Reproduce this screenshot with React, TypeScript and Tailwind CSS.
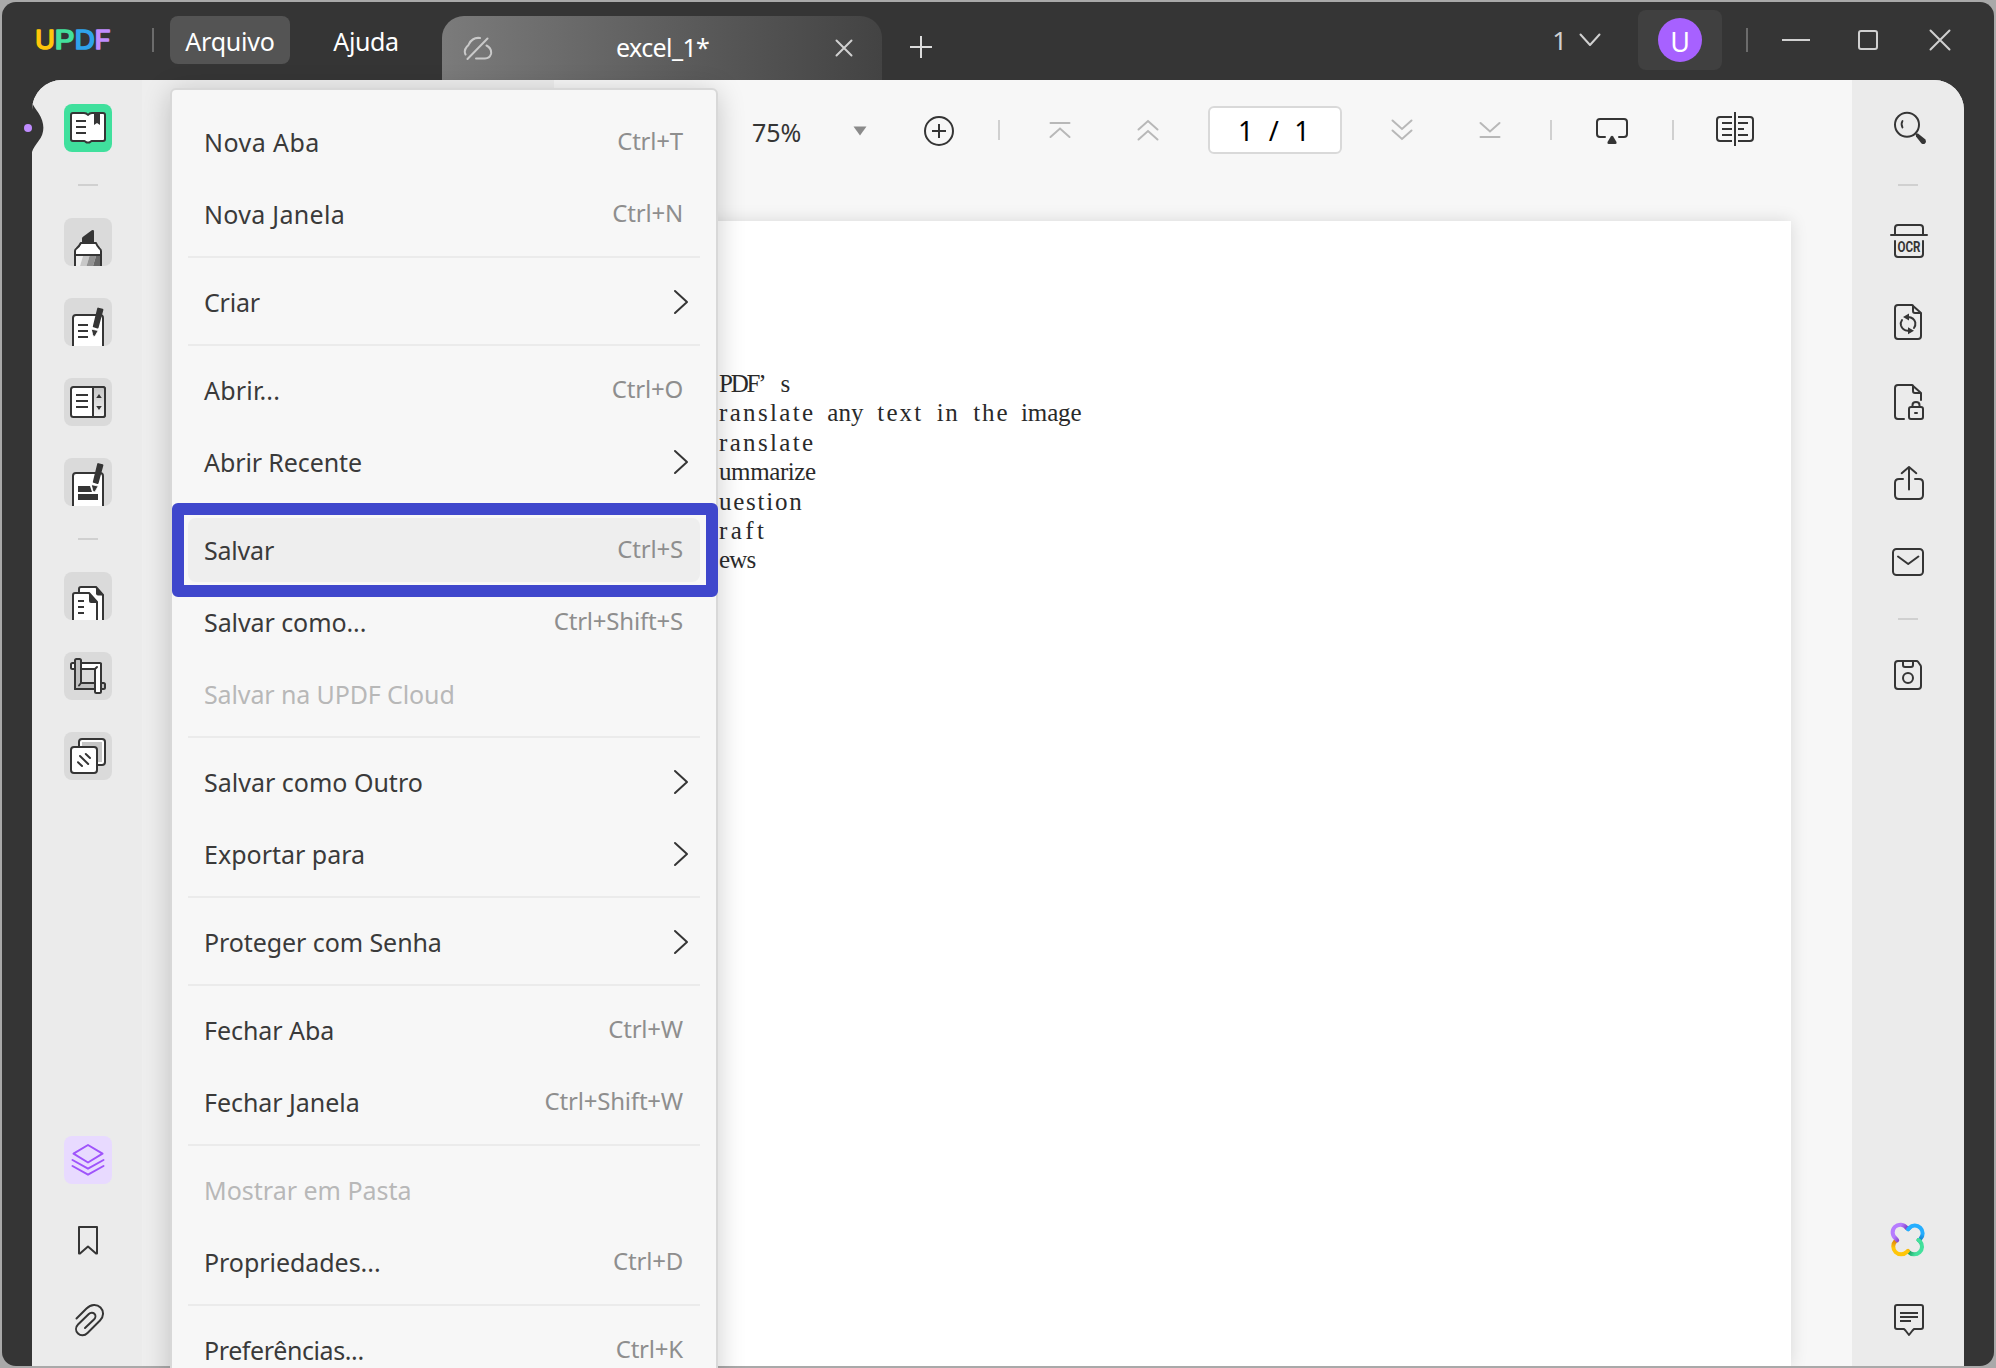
import React, { type ReactNode } from "react";

const INK = "#353535";

function Glyph({ children, stroke = INK }: { children: ReactNode; stroke?: string }) {
  return (
    <svg
      viewBox="0 0 48 48"
      className="block h-12 w-12 shrink-0"
      fill="none"
      stroke={stroke}
      strokeWidth={2}
      strokeLinecap="round"
      strokeLinejoin="round"
    >
      {children}
    </svg>
  );
}

function Tile({ children, tone = "bg-[#dadada]" }: { children: ReactNode; tone?: string }) {
  return <button className={`block h-12 w-12 overflow-hidden rounded-lg ${tone}`}>{children}</button>;
}

function Dash() {
  return <div className="h-0.5 w-5 shrink-0 bg-[#d0d0d0]" />;
}

function Pen({ dy = 0 }: { dy?: number }) {
  return (
    <g transform={`translate(0 ${dy})`}>
      <path d="M34.2 10.6 L38.4 11.8 L33.6 29.6 L29.8 28.4 Z" fill={INK} strokeWidth={2} />
      <path d="M27.6 31.2 L34.2 32.6 L31 38.2 L29.8 38.6 L28.8 37 Z" fill={INK} stroke="#fff" strokeWidth={0.8} />
    </g>
  );
}

/* ---------- left rail ---------- */

function ReaderIcon() {
  return (
    <Glyph>
      <path
        d="M9 9 H20 Q22.5 9 24 11 Q25.5 9 28 9 H39 Q41 9 41 11 V35 Q41 37 39 37 H27.5 L25.5 38.4 H22.5 L20.500 37 H9 Q7 37 7 35 V11 Q7 9 9 9 Z"
        fill="#fff"
      />
      <path d="M30 8 H36 V21 L33 19 L30 21 Z" fill={INK} stroke="none" />
      <path d="M12 17 H22 M12 23 H22 M12 29 H22" strokeLinecap="butt" />
    </Glyph>
  );
}

function HighlighterIcon() {
  return (
    <Glyph>
      <path d="M11 50 V33 Q11 31.500 12.500 30.500 Q15.500 28 16.800 25 H32 Q33 28 35.500 30.500 Q37 31.500 37 33 V50 Z" fill="#fff" />
      <path d="M12 38 H19 L16 48 H12 Z" fill="#f0f0f0" stroke="none" />
      <path d="M19 38 H25.500 L22.500 48 H16 Z" fill="#c8c8c8" stroke="none" />
      <path d="M25.500 38 H32 L29 48 H22.500 Z" fill="#929292" stroke="none" />
      <path d="M32 38 H36 V48 H29 Z" fill="#686868" stroke="none" />
      <path d="M11 37 H37" />
      <path d="M18 25 V20.500 Q18 19.500 19 18.700 L27.800 12.300 Q30 11.500 30 13.500 V25 Z" fill={INK} stroke="none" />
    </Glyph>
  );
}

function EditIcon() {
  return (
    <Glyph>
      <path d="M9 50 V20 Q9 17 12 17 H36 Q39 17 39 20 V50" fill="#fff" />
      <path d="M14 27 H24 M14 33 H24 M14 39 H24" strokeLinecap="butt" />
      <Pen />
    </Glyph>
  );
}

function FormIcon() {
  return (
    <Glyph>
      <defs>
        <linearGradient id="form-side" x1="0" y1="0" x2="0" y2="1">
          <stop offset="0" stopColor="#c4c4c4" />
          <stop offset="1" stopColor="#f5f5f5" />
        </linearGradient>
      </defs>
      <rect x="7" y="9" width="34" height="30" rx="2.500" fill="#fff" />
      <path d="M29 9 H39 Q41 9 41 11 V37 Q41 39 39 39 H29 Z" fill="url(#form-side)" />
      <path d="M12 17 H24 M12 23 H24 M12 29 H24" strokeLinecap="butt" />
      <path d="M32.200 20 L35 16 L37.800 20 Z M32.200 28 L35 32 L37.800 28 Z" fill={INK} stroke="none" />
    </Glyph>
  );
}

function RedactIcon() {
  return (
    <Glyph>
      <path d="M9 50 V18 Q9 15 12 15 H36 Q39 15 39 18 V50" fill="#fff" />
      <path d="M14 28 H26 L28 34 H14 Z M14 36 H34 V42 H14 Z" fill={INK} stroke="none" />
      <Pen dy={-4.5} />
    </Glyph>
  );
}

function PagesIcon() {
  return (
    <Glyph>
      <path d="M15 24 V17 Q15 15 17 15 H32 L39 23 V50 H24 Z" fill="#fff" />
      <path d="M32 14.500 L40 23.500 H34 Q32 23.500 32 21.500 Z" fill={INK} stroke="none" />
      <path d="M9 50 V23 Q9 21 11 21 H25 L33 30 V50" fill="#fff" />
      <path d="M25 20.500 L34 31 H27 Q25 31 25 29 Z" fill={INK} stroke="none" />
      <path d="M14 29 H20 M14 35 H20 M14 41 H20" strokeLinecap="butt" />
    </Glyph>
  );
}

function CropIcon() {
  return (
    <Glyph>
      <rect x="7" y="11" width="8" height="6" rx="1.500" fill="#f2f2f2" />
      <rect x="34" y="31" width="7" height="6" rx="1.500" fill="#c0c0c0" />
      <path d="M13 31 H33 V37 H11 V20 Z" fill="#c0c0c0" />
      <path d="M17 11 H36 Q37 11 37 12 V18 L31 17 H17 Z" fill="#fff" />
      <rect x="31" y="14" width="6" height="27" rx="1.500" fill="#fff" stroke="none" />
      <path d="M37 12 V39.500 Q37 41 35.500 41 H32.500 Q31 41 31 39.500 V17 L33 15" fill="none" />
      <path d="M11 37 V8.500 Q11 7 12.500 7 H15.500 Q17 7 17 8.500 V31 L15 33.500" fill="#c0c0c0" />
      <path d="M17 17 H31 M17 31 H31" />
    </Glyph>
  );
}

function WatermarkIcon() {
  return (
    <Glyph>
      <rect x="15" y="7" width="26" height="26" rx="3" fill="#fff" />
      <rect x="18" y="10" width="20" height="20" fill="#c6c6c6" stroke="none" />
      <rect x="7" y="15" width="26" height="26" rx="3" fill="#fff" />
      <path d="M21.800 22 L26 26 M16 24 L24.200 32 M14 30.300 L18 34" />
    </Glyph>
  );
}

/* ---------- right rail ---------- */

function SearchIcon() {
  return (
    <Glyph>
      <circle cx="23" cy="20.800" r="12" />
      <path d="M18.500 17 Q16.600 20 18.500 23.500" strokeWidth={1.800} />
      <path d="M31.500 29.500 L34 29.500 L41.500 35.500 Q42.500 37.500 41 39.500 Q39.500 40.500 37.500 39.500 L32 32.500 Z" fill={INK} stroke="none" />
    </Glyph>
  );
}

function OcrIcon() {
  return (
    <Glyph>
      <path d="M11 17 V10 Q11 7 14 7 H36 Q39 7 39 10 V17 M7 17 H43 M11 23 V36 Q11 39 14 39 H36 Q39 39 39 36 V23" />
      <text
        x="13.500"
        y="34"
        fontFamily="Roboto, 'Liberation Sans', sans-serif"
        fontWeight="700"
        fontSize="14"
        textLength="23"
        lengthAdjust="spacingAndGlyphs"
        fill={INK}
        stroke="none"
      >
        OCR
      </text>
    </Glyph>
  );
}

function ConvertIcon() {
  return (
    <Glyph>
      <path d="M28 7 H14 Q11 7 11 10 V38 Q11 41 14 41 H34 Q37 41 37 38 V15 Z M29 7.500 V13 Q29 15 31 15 H36.500" />
      <path d="M18 22 Q16.200 24.600 17 27.500 Q18.500 32.500 24 32.800 M24 19 Q30 19.500 31.300 24.500 Q31.800 27.500 30 30" />
      <path d="M25 15.500 V22.500 L19 19 Z M24 29.300 V36.300 L30 32.800 Z" fill={INK} stroke="none" />
    </Glyph>
  );
}

function ProtectIcon() {
  return (
    <Glyph>
      <path d="M20 41 H14 Q11 41 11 38 V10 Q11 7 14 7 H28 L37 15 V22 M29 7.500 V13 Q29 15 31 15 H36.500" />
      <rect x="25" y="29" width="14" height="12" rx="2" />
      <path d="M28.500 29 V27 Q28.500 24 32 24 Q35.500 24 35.500 27 V29 M31 35 H33" />
    </Glyph>
  );
}

function ShareIcon() {
  return (
    <Glyph>
      <path d="M19 21 H15 Q11 21 11 25 V37 Q11 41 15 41 H35 Q39 41 39 37 V25 Q39 21 35 21 H31 M25 31.500 V9 M17.700 15.200 L25 9 L32.300 15.200" />
    </Glyph>
  );
}

function MailIcon() {
  return (
    <Glyph>
      <rect x="9" y="11" width="30" height="26" rx="3.500" />
      <path d="M14 18.500 L24.200 26 L34.400 18.500" />
    </Glyph>
  );
}

function SaveIcon() {
  return (
    <Glyph>
      <path d="M14 9 H32.500 Q33.500 9 34.200 10 L36.400 13.200 Q37 14 37 15 V34 Q37 37 34 37 H14 Q11 37 11 34 V12 Q11 9 14 9 Z" />
      <path d="M19 9 V13 Q19 15 21 15 H27 Q29 15 29 13 V9" />
      <circle cx="24" cy="26" r="5" />
    </Glyph>
  );
}

function AssistantIcon() {
  return (
    <svg viewBox="0 0 48 48" className="block h-12 w-12" fill="none" strokeWidth={4} strokeLinecap="round" strokeLinejoin="round">
      <defs>
        <linearGradient id="lobe-purple" gradientUnits="userSpaceOnUse" x1="17" y1="9" x2="24" y2="13">
          <stop offset="0" stopColor="#b67cff" />
          <stop offset="1" stopColor="#7434bb" />
        </linearGradient>
        <linearGradient id="lobe-blue" gradientUnits="userSpaceOnUse" x1="39" y1="18" x2="36" y2="25">
          <stop offset="0" stopColor="#25aeff" />
          <stop offset="1" stopColor="#0f72c0" />
        </linearGradient>
        <linearGradient id="lobe-green" gradientUnits="userSpaceOnUse" x1="31" y1="39" x2="24" y2="35">
          <stop offset="0" stopColor="#43e09c" />
          <stop offset="1" stopColor="#13945b" />
        </linearGradient>
        <linearGradient id="lobe-amber" gradientUnits="userSpaceOnUse" x1="10" y1="32" x2="12" y2="23">
          <stop offset="0" stopColor="#ffc60a" />
          <stop offset="1" stopColor="#d5760c" />
        </linearGradient>
      </defs>
      <path d="M24.500 35.800 A7.700 7.700 0 1 0 36 25.300 L34.500 24" stroke="url(#lobe-green)" />
      <path d="M24 13.200 L25.300 12 A7.700 7.700 0 1 1 36.500 22.700" stroke="url(#lobe-blue)" />
      <path d="M34.500 24 L36 25.300" stroke="#43e09c" />
      <path d="M11.500 25 A7.700 7.700 0 1 0 22.700 36 L24 34.800" stroke="url(#lobe-amber)" />
      <path d="M13.200 24.300 L12 22.700 A7.700 7.700 0 1 1 22.700 12" stroke="url(#lobe-purple)" />
      <path d="M24 13.200 L25.300 12" stroke="#25aeff" />
    </svg>
  );
}

function CommentIcon() {
  return (
    <Glyph>
      <path d="M13 9 H37 Q39 9 39 11 V31 Q39 33 37 33 H30 L28.500 34.500 L25 39 L21.500 34.500 L20 33 H13 Q11 33 11 31 V11 Q11 9 13 9 Z" />
      <path d="M16 17 H34 M16 21 H34 M16 25 H27" strokeLinecap="butt" />
    </Glyph>
  );
}

/* ---------- title bar ---------- */

function Logo() {
  return (
    <svg
      viewBox="0 0 80 40"
      className="ml-[33px] h-10 w-20"
      fontFamily="Inter, sans-serif"
      fontSize="25"
      fontWeight="400"
      strokeWidth="1.600"
      strokeLinejoin="round"
      strokeLinecap="round"
    >
      <text x="0" y="29" fill="#ffc60a" stroke="#ffc60a" textLength="20" lengthAdjust="spacingAndGlyphs">U</text>
      <text x="19.500" y="29" fill="#43e09c" stroke="#43e09c" textLength="20" lengthAdjust="spacingAndGlyphs">P</text>
      <text x="39.500" y="29" fill="#2fa3ec" stroke="#2fa3ec" textLength="20.500" lengthAdjust="spacingAndGlyphs">D</text>
      <text x="59.500" y="29" fill="#c08cff" stroke="#c08cff" textLength="16.500" lengthAdjust="spacingAndGlyphs">F</text>
    </svg>
  );
}

function TitleBar() {
  return (
    <header className="flex h-[78px] shrink-0 items-start text-[25px] leading-none text-white">
      <div className="flex h-[76px] items-center">
        <Logo />
        <div className="ml-[37px] h-6 w-0.5 bg-[#6c6c6c]" />
      </div>
      <button className="mt-3.5 ml-4 h-12 w-[120px] rounded-lg bg-[#545454] pt-[3px] tracking-[-0.2px]">Arquivo</button>
      <button className="mt-3.5 ml-4 h-12 w-[120px] pt-[3px] tracking-[-0.4px]">Ajuda</button>
      <div className="mt-3.5 ml-4 flex h-16 w-[440px] items-center rounded-t-[22px] bg-gradient-to-r from-[#7b7b7b] to-[#434343]">
        <svg viewBox="0 0 30 24" className="ml-[21px] h-6 w-[30px]" fill="none" stroke="#c9c9c9" strokeWidth="2" strokeLinecap="round">
          <path d="M2.500 18.500 Q0.500 14.500 4 10.500 Q5.500 9.500 6 8 Q9.500 1 17 2 M23.500 9.500 Q29 12.500 28 18 Q26.500 22.500 22 22.500 H13 M24.500 2.500 L4.500 23" />
        </svg>
        <span className="w-[220px] pb-0.5 pl-[123px] text-[25px] tracking-[-0.6px] whitespace-nowrap">excel_1*</span>
        <svg viewBox="0 0 18 18" className="ml-[122px] h-[18px] w-[18px]" stroke="#d0d0d0" strokeWidth="2" strokeLinecap="round">
          <path d="M1.500 1.500 L16.500 16.500 M16.500 1.500 L1.500 16.500" />
        </svg>
      </div>
      <svg viewBox="0 0 24 24" className="mt-[33px] ml-[27px] h-6 w-6" stroke="#dcdcdc" strokeWidth="2">
        <path d="M12 1 V23 M1 12 H23" />
      </svg>
      <div className="mt-2 ml-auto flex h-[60px] items-center">
        <span className="text-[26px] text-[#d0d0d0]">1</span>
        <svg viewBox="0 0 22 14" className="ml-3 h-3.5 w-[22px]" fill="none" stroke="#d0d0d0" strokeWidth="2" strokeLinecap="round" strokeLinejoin="round">
          <path d="M1.500 1.500 L11 12 L20.500 1.500" />
        </svg>
        <div className="ml-[37px] flex h-[60px] w-[84px] items-center justify-center rounded-lg bg-[#404040]">
          <div className="flex h-11 w-11 items-center justify-center rounded-full bg-[#a761ff] pt-[3px] text-[27px]">U</div>
        </div>
        <div className="ml-6 h-6 w-0.5 bg-[#6c6c6c]" />
        <div className="ml-[34px] h-0.5 w-7 bg-[#d0d0d0]" />
        <div className="ml-12 h-5 w-5 rounded-[3px] border-2 border-[#d0d0d0]" />
        <svg viewBox="0 0 22 22" className="mr-[43px] ml-[51px] h-[22px] w-[22px]" stroke="#d0d0d0" strokeWidth="2" strokeLinecap="round">
          <path d="M1.500 1.500 L20.500 20.500 M20.500 1.500 L1.500 20.500" />
        </svg>
      </div>
    </header>
  );
}

/* ---------- page toolbar ---------- */

function Nav({ d, className }: { d: string; className: string }) {
  return (
    <svg viewBox="0 0 22 22" className={`h-[22px] w-[22px] ${className}`} fill="none" stroke="#b8b8b8" strokeWidth="2" strokeLinecap="round">
      <path d={d} />
    </svg>
  );
}

function Rule({ className }: { className: string }) {
  return <div className={`h-5 w-0.5 bg-[#d0d0d0] ${className}`} />;
}

function Toolbar() {
  return (
    <div className="flex h-[100px] w-full items-center pl-[198px] text-[#353535]">
      <span className="mt-1 w-[60px] text-[25px] leading-none tracking-[-0.1px]">75%</span>
      <svg viewBox="0 0 14 10" className="mt-0.5 ml-[41px] h-2.5 w-3.5" fill="#8a8a8a">
        <path d="M0.500 0.500 H13.500 L7 9.500 Z" />
      </svg>
      <svg viewBox="0 0 32 32" className="mt-0.5 ml-[56px] h-8 w-8" fill="none" stroke={INK} strokeWidth="2">
        <circle cx="16" cy="16" r="14" />
        <path d="M16 9 V23 M9 16 H23" />
      </svg>
      <Rule className="ml-[43px]" />
      <Nav className="ml-[49px]" d="M1.500 4 H20.500 M1.500 18 L11 9.500 L20.500 18" />
      <Nav className="ml-[66px]" d="M1.500 10.500 L11 2 L20.500 10.500 M1.500 20.500 L11 12 L20.500 20.500" />
      <div className="ml-[49px] flex h-12 w-[134px] items-center justify-center rounded-md border-2 border-[#d9d9d9] bg-white pl-0.5 text-[27px] leading-none tracking-[4.2px] whitespace-nowrap text-black">
        1 / 1
      </div>
      <Nav className="ml-[49px]" d="M1.500 1.500 L11 10 L20.500 1.500 M1.500 11.500 L11 20 L20.500 11.500" />
      <Nav className="ml-[66px]" d="M1.500 18 H20.500 M1.500 4 L11 12.500 L20.500 4" />
      <Rule className="ml-[49px]" />
      <svg viewBox="0 0 34 28" className="mt-0.5 ml-[43px] h-7 w-[34px]" fill="none" stroke={INK} strokeWidth="2" strokeLinecap="round">
        <path d="M10 20 H5 Q2 20 2 17 V5 Q2 2 5 2 H29 Q32 2 32 5 V17 Q32 20 29 20 H24" />
        <path d="M15.800 19.500 Q17 18 18.200 19.500 L21.500 25 Q22 27 20.500 27 H13.500 Q12 27 12.500 25 Z" fill={INK} stroke="none" />
      </svg>
      <Rule className="ml-[43px]" />
      <svg viewBox="0 0 40 36" className="-mt-0.5 ml-[41px] h-9 w-10" fill="none" stroke={INK} strokeWidth="2">
        <path d="M17 6 H5 Q2 6 2 9 V27 Q2 30 5 30 H17 M23 6 H35 Q38 6 38 9 V27 Q38 30 35 30 H23 M20 1 V35 M7 12 H17 M7 18 H17 M7 24 H17 M23 12 H33 M23 18 H29 M23 24 H33" />
      </svg>
    </div>
  );
}

/* ---------- menu ---------- */

type Entry =
  | "rule"
  | { label: string; keys?: string; sub?: boolean; off?: boolean; on?: boolean; fit: string };

const MENU: Entry[] = [
  { label: "Nova Aba", keys: "Ctrl+T", fit: "tracking-[0.45px]" },
  { label: "Nova Janela", keys: "Ctrl+N", fit: "tracking-[0.3px]" },
  "rule",
  { label: "Criar", sub: true, fit: "tracking-[-0.2px]" },
  "rule",
  { label: "Abrir...", keys: "Ctrl+O", fit: "tracking-[0.2px]" },
  { label: "Abrir Recente", sub: true, fit: "tracking-[-0.1px]" },
  "rule",
  { label: "Salvar", keys: "Ctrl+S", on: true, fit: "tracking-[-0.2px]" },
  { label: "Salvar como...", keys: "Ctrl+Shift+S", fit: "tracking-[-0.08px]" },
  { label: "Salvar na UPDF Cloud", off: true, fit: "tracking-[-0.12px]" },
  "rule",
  { label: "Salvar como Outro", sub: true, fit: "tracking-normal" },
  { label: "Exportar para", sub: true, fit: "tracking-normal" },
  "rule",
  { label: "Proteger com Senha", sub: true, fit: "tracking-[-0.08px]" },
  "rule",
  { label: "Fechar Aba", keys: "Ctrl+W", fit: "tracking-[-0.05px]" },
  { label: "Fechar Janela", keys: "Ctrl+Shift+W", fit: "tracking-[-0.05px]" },
  "rule",
  { label: "Mostrar em Pasta", off: true, fit: "tracking-normal" },
  { label: "Propriedades...", keys: "Ctrl+D", fit: "tracking-[-0.05px]" },
  "rule",
  { label: "Preferências...", keys: "Ctrl+K", fit: "tracking-[-0.4px]" },
];

function Menu() {
  return (
    <nav className="absolute top-[88px] left-[170px] h-[1300px] w-[548px] rounded-md border-2 border-[#d8d8d8] bg-[#f7f7f7] px-4 pt-4 shadow-[0_4px_28px_rgba(0,0,0,0.2)]">
      {MENU.map((e, i) =>
        e === "rule" ? (
          <div key={i} className="h-4 pt-1.5">
            <div className="h-0.5 bg-[#ebebeb]" />
          </div>
        ) : (
          <div key={i} className="relative h-[72px] py-1">
            <div className={`flex h-16 items-center justify-between rounded-lg pr-[17px] pl-4 leading-none ${e.on ? "bg-[#eeeeee]" : ""}`}>
              <span className={`text-[25px] whitespace-nowrap ${e.fit} ${e.off ? "text-[#b8b8b8]" : "text-[#3a3a3a]"}`}>
                {e.label}
              </span>
              {e.keys && <span className="pb-[2px] text-[24px] tracking-[-0.2px] text-[#8e8e8e]">{e.keys}</span>}
              {e.sub && (
                <svg viewBox="0 0 16 26" className="-mr-1.5 h-[26px] w-4" fill="none" stroke={INK} strokeWidth="2" strokeLinecap="round" strokeLinejoin="round">
                  <path d="M2 2 L14 13 L2 24" />
                </svg>
              )}
            </div>
            {e.on && <div className="absolute top-[-11px] left-[-16px] h-[94px] w-[546px] rounded-md border-x-[12px] border-y-[12px] border-[#3f47cc]" />}
          </div>
        ),
      )}
    </nav>
  );
}

const LINES: [string, string][][] = [
  [["PDF", "tracking-[-2.200px]"], ["’", "tracking-[2px]"], [" s", "tracking-[2px]"]],
  [
    ["ranslate", "tracking-[2.350px]"],
    [" any", "tracking-[0.030px]"],
    [" text", "tracking-[2.100px]"],
    [" in", "tracking-[1.700px]"],
    [" the", "tracking-[1.900px]"],
    [" image", "tracking-[-0.150px]"],
  ],
  [["ranslate", "tracking-[2.350px]"]],
  [["ummarize", "tracking-[-0.400px]"]],
  [["uestion", "tracking-[1.750px]"]],
  [["raft", "tracking-[3.400px]"]],
  [["ews", "tracking-[-0.800px]"]],
];

export default function App() {
  return (
    <div className="relative h-[1368px] w-[1996px] overflow-hidden bg-[#a9a9a9] p-0.5 font-['Noto_Sans','Open_Sans',sans-serif]">
      <div className="flex h-[1364px] w-[1992px] flex-col overflow-hidden rounded-[14px] bg-[#353535]">
        <TitleBar />
        <div className="ml-[30px] flex h-[1286px] w-[1932px] overflow-hidden rounded-t-[30px] bg-[#ebebeb]">
          <aside className="relative flex w-[110px] shrink-0 flex-col items-center bg-[#ebebeb] pl-0.5">
            <svg viewBox="0 0 12 56" className="absolute top-5 left-0 h-14 w-3" fill="#353535">
              <path d="M0 2 C1 6 4 9 6.500 13 C13 23 13 33 6.500 41 C4 45 1 48 0 52 Z" />
            </svg>
            <div className="flex h-full flex-col items-center gap-8 pt-6">
              <Tile tone="bg-[#40e09d]"><ReaderIcon /></Tile>
              <Dash />
              <Tile><HighlighterIcon /></Tile>
              <Tile><EditIcon /></Tile>
              <Tile><FormIcon /></Tile>
              <Tile><RedactIcon /></Tile>
              <Dash />
              <Tile><PagesIcon /></Tile>
              <Tile><CropIcon /></Tile>
              <Tile><WatermarkIcon /></Tile>
              <div className="mt-auto mb-[22px] flex flex-col gap-8">
                <Tile tone="bg-[#e8daff]">
                  <Glyph stroke="#9f54fb">
                    <path d="M24 9 L38.500 17.700 L24 26.500 L9.500 17.700 Z M8.500 24 L24 32.700 L39.500 24 M8.500 30 L24 38.700 L39.500 30" />
                  </Glyph>
                </Tile>
                <Glyph>
                  <path d="M15 11 H33 V37.500 L32 37.500 L24 30.500 L16 37.500 L15 37.500 Z" />
                </Glyph>
                <Glyph>
                  <path d="M12.500 22.500 L22.500 12.500 C27 8 33 8 36.500 11.500 C40 15 40 20.500 36 24.500 L23.500 37 C20.500 40 16.500 40 14 37.500 C11.300 34.800 11.500 31 14 28.500 L24.800 18 C26.500 16.300 29 16.300 30.400 17.700 C31.800 19.100 31.800 21.500 30.200 23.200 L21 32" />
                </Glyph>
              </div>
            </div>
          </aside>
          <div className="w-[412px] shrink-0 bg-[#eeeeee]" />
          <main className="flex w-[1298px] shrink-0 flex-col bg-[#f7f7f7]">
            <Toolbar />
            <section className="mt-[41px] h-[1145px] w-[1237px] bg-white pt-[148px] pl-[165px] shadow-[0_0_16px_rgba(0,0,0,0.13)]">
              {LINES.map((words, i) => (
                <p
                  key={i}
                  className="h-[29.4px] font-['Liberation_Serif',serif] text-[25px] leading-[29.4px] [word-spacing:5.500px] whitespace-pre text-[#2a2a2a]"
                >
                  {words.map(([text, fit], j) => (
                    <span key={j} className={fit}>
                      {text}
                    </span>
                  ))}
                </p>
              ))}
            </section>
          </main>
          <aside className="flex w-28 shrink-0 flex-col items-center gap-8 bg-[#ebebeb] pt-6">
            <SearchIcon />
            <Dash />
            <OcrIcon />
            <ConvertIcon />
            <ProtectIcon />
            <ShareIcon />
            <MailIcon />
            <Dash />
            <SaveIcon />
            <div className="mt-auto mb-[22px] flex flex-col gap-8">
              <AssistantIcon />
              <CommentIcon />
            </div>
          </aside>
        </div>
      </div>
      <div className="absolute top-[124px] left-6 h-2 w-2 rounded-full bg-[#c08cff]" />
      <Menu />
    </div>
  );
}
